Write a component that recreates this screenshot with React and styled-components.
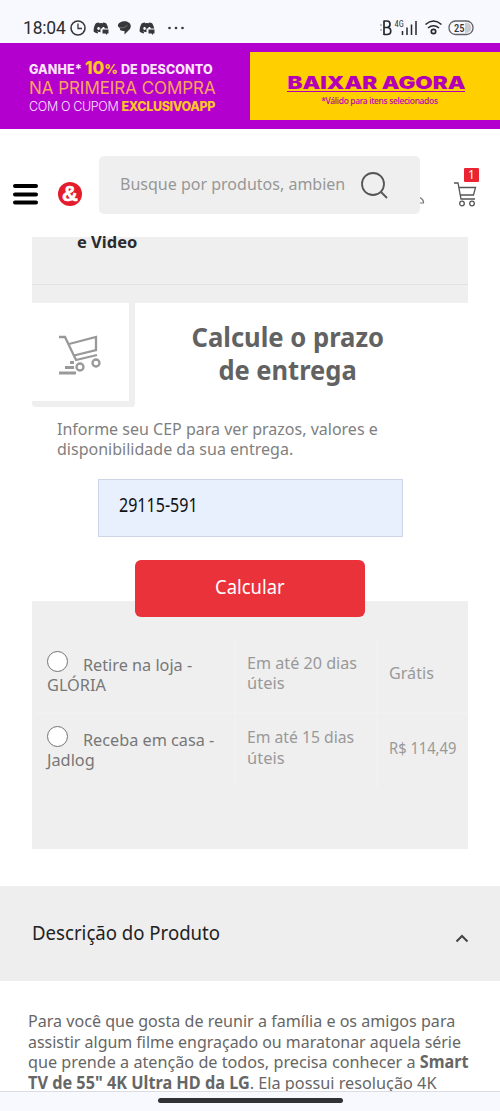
import styled, { createGlobalStyle } from "styled-components";
import { FaDiscord } from "react-icons/fa6";

const GlobalStyle = createGlobalStyle`
* {
	box-sizing: border-box;
}
body {
	margin: 0;
	background-color: #fff;
	font-family: "Noto Sans", "Open Sans", sans-serif;
	font-stretch: 87.5%;
	overflow: hidden;
}
`

const Screen = styled.div`
width: 500px;
height: 1111px;
display: flex;
flex-direction: column;
overflow: hidden;
background-color: #fff;
`

const Line = styled.span`
display: block;
width: max-content;
white-space: nowrap;
transform: scaleX(${(props) => props.$fit || 0.942});
transform-origin: ${(props) => props.$origin || "left"} center;
`

// status bar
const StatusBar = styled.div`
height: 43px;
flex: none;
display: flex;
align-items: flex-start;
padding: 18px 26px 0 23px;
background-color: #f8f9fe;
color: #2b2d30;
font-family: Roboto, sans-serif;
`
const Clock = styled.span`
width: 47px;
font-size: 17.5px;
line-height: 21px;
letter-spacing: -0.2px;
font-stretch: 100%;
`
const StatusLeft = styled.svg`
flex: none;
`
const StatusRight = styled.svg`
flex: none;
margin-left: auto;
`

// app banner
const Banner = styled.section`
height: 86px;
flex: none;
display: grid;
grid-template-columns: 250px 250px;
background-color: #b300cf;
font-family: Inter, sans-serif;
font-stretch: normal;
`
const Offer = styled.div`
padding: 17px 0 0 29px;
`
const OfferLine = styled.div`
width: max-content;
height: ${(props) => props.$height};
line-height: ${(props) => props.$height};
font-size: ${(props) => props.$size};
font-weight: ${(props) => props.$weight || 400};
color: ${(props) => props.$color || "#fbe3fb"};
letter-spacing: ${(props) => props.$spacing || "0"};
white-space: nowrap;

b {
	color: #ffc526;
	font-weight: 800;
}
`
const Percent = styled.b`
font-size: 17px;
line-height: 1;

small {
	font-size: 13px;
}
`
const Download = styled.div`
margin: 9px 0;
padding-top: 22px;
display: flex;
flex-direction: column;
align-items: center;
background-color: #ffcf00;
color: #b300b8;
`
const DownloadTitle = styled.div`
width: 178px;
height: 18px;
display: flex;
justify-content: center;
margin-left: 2px;
border-bottom: 1px solid #b300b8;
font-size: 17px;
line-height: 19px;
font-weight: 900;

span {
	white-space: nowrap;
	transform: scaleX(1.32);
}
`
const DownloadNote = styled.div`
padding-left: 9px;
font-family: "Noto Sans", sans-serif;
font-size: 8.5px;
line-height: 18px;
font-weight: 500;
letter-spacing: -0.35px;
white-space: nowrap;
`

// store header
const Header = styled.header`
height: 108px;
flex: none;
display: flex;
align-items: flex-start;
padding: 27px 0 0 12px;
`
const MenuButton = styled.svg`
flex: none;
margin: 25px 19px 0 0;
`
const Logo = styled.div`
flex: none;
width: 24px;
height: 24px;
margin: 26px 17px 0 0;
display: flex;
justify-content: center;
align-items: center;
border-radius: 50%;
background-color: #e31d2b;
color: #fff;
font-family: "Liberation Sans", sans-serif;
font-size: 22px;
font-weight: 700;
line-height: 24px;
-webkit-text-stroke: 0.6px #fff;
`
const Search = styled.div`
flex: none;
width: 321px;
height: 58px;
padding: 0 32px 0 21px;
display: grid;
grid-template-columns: 240px 28px;
align-items: center;
border-radius: 5px;
background-color: #efefef;
color: #979797;
font-size: 17px;
line-height: 52px;

span {
	margin-bottom: 2px;
}
`
const Account = styled.svg`
flex: none;
margin: 40px 0 0;
`
const Cart = styled.div`
position: relative;
margin: 26px 0 0 29px;
`
const Badge = styled.span`
position: absolute;
top: -14px;
left: 10px;
width: 15px;
height: 14px;
border-radius: 1px;
background-color: #ea2430;
color: #fff;
font-size: 12px;
line-height: 13px;
text-align: center;
`

// delivery
const Category = styled.div`
height: 66px;
flex: none;
margin: 0 32px;
background-color: #efefef;
`
const CategoryName = styled.div`
height: 48px;
padding-left: 45px;
border-bottom: 1px solid #e2e2e2;
color: #2b2b2b;
font-size: 16px;
font-weight: 700;
line-height: 10px;
`
const Delivery = styled.section`
height: 298px;
flex: none;
margin: 0 32px;
`
const DeliveryHead = styled.div`
height: 104px;
display: flex;
`
const IconBox = styled.div`
width: 103px;
height: 104px;
padding: 31px 0 0 26px;
border: solid #efefef;
border-width: 0 6px 6px 0;
border-radius: 0 0 4px 4px;
`
const Title = styled.h2`
width: 306px;
margin: 18px 0 0;
display: flex;
flex-direction: column;
align-items: center;
color: #626262;
font-size: 26px;
font-weight: 700;
line-height: 32.5px;
`
const Hint = styled.div`
height: 72px;
padding: 11.5px 0 0 25px;
color: #808080;
font-size: 17px;
line-height: 20.6px;
`
const CepInput = styled.div`
width: 305px;
height: 58px;
margin: 0 66px;
padding-left: 20px;
border: 1px solid #cdd5e6;
background-color: #e8effd;
color: #101114;
font-size: 19px;
line-height: 51px;
`
const Calculate = styled.button`
display: flex;
justify-content: center;
align-items: center;
position: relative;
width: 230px;
height: 57px;
margin: 23px 0 0 103px;
padding: 0 0 4px;
border: 0;
border-radius: 6px;
background-color: #ea323b;
color: #fff;
font: inherit;
font-size: 20px;
`
const Options = styled.div`
height: 248px;
flex: none;
margin: 0 32px;
padding: 38px 0 0 3px;
background-color: #efefef;
`
const Option = styled.div`
height: 74.5px;
display: grid;
grid-template-columns: 201px 142px 90px;
border-bottom: 2px solid #f1f1f1;
color: #999;
font-size: 17px;
line-height: 20.6px;

&:last-child {
	border-bottom: 0;
}
`
const Method = styled.div`
padding: 12px 0 0 12px;
border-right: 2px solid #f1f1f1;
color: #777;
`
const MethodTop = styled.div`
height: 24px;
display: flex;
gap: 15px;

span {
	margin-top: 4px;
}
`
const Radio = styled.i`
width: 21px;
height: 21px;
border: 1px solid #737373;
border-radius: 50%;
background-color: #fff;
`
const Term = styled.div`
padding: 13.5px 0 0 11px;
border-right: 2px solid #f1f1f1;
`
const Price = styled.div`
padding: 24px 0 0 11px;
`

// description
const Accordion = styled.div`
height: 95px;
flex: none;
margin-top: 37px;
padding: 0 31px 0 32px;
display: flex;
justify-content: space-between;
align-items: center;
background-color: #eee;
color: #222;
font-size: 20px;
line-height: 20px;

span {
	margin-bottom: 2px;
}

svg {
	margin-top: 9px;
}
`
const Description = styled.div`
height: 110px;
flex: none;
padding: 30px 0 0 28px;
overflow: hidden;
color: #666;
font-size: 17px;
line-height: 20.6px;
`
const NavBar = styled.div`
height: 20px;
flex: none;
display: flex;
justify-content: center;
padding-top: 6px;
border-top: 1px solid #dcdde2;
background-color: #f8f9fe;
`
const Handle = styled.div`
width: 185px;
height: 5px;
border-radius: 3px;
background-color: #303336;
`

const options = [
	{ top: "Retire na loja -", bottom: "GLÓRIA", days: "Em até 20 dias", daysFit: 0.95, price: "Grátis", priceFit: 0.95 },
	{ top: "Receba em casa -", bottom: "Jadlog", days: "Em até 15 dias", daysFit: 0.925, price: "R$ 114,49", priceFit: 0.865 },
];

function PhoneStatus() {
	return (
		<StatusBar>
			<Clock>18:04</Clock>
			<StatusLeft width="120" height="20" fill="none" stroke="#35383b">
				<circle cx="8" cy="10" r="7" strokeWidth="1.6" />
				<path d="M8 5.5v5h4" strokeWidth="1.3" />
				<FaDiscord x="23" y="2" width="16" height="16" color="#35383b" stroke="none" />
				<path d="M30.500 10.500h9v7h-9z" fill="#f8f9fe" stroke="none" />
				<path d="M32.500 11.500h6v4h-1.500v1.500l-1.500-1.500h-3z" fill="#35383b" stroke="none" />
				<path d="M50 4.500c3-2 7-1.500 8.500 0 3 1 3 6 0 8l-4 4v-3.500c-4 0-5-1-4.500-3-3-1-2.500-4.500 0-5.500z" fill="#35383b" stroke="none" />
				<path d="M49.500 9.500c3 1 6 0 8-2.500" stroke="#8b8d90" strokeWidth="0.7" />
				<FaDiscord x="69" y="2" width="16" height="16" color="#35383b" stroke="none" />
				<path d="M76.500 10.500h9v7h-9z" fill="#f8f9fe" stroke="none" />
				<path d="M78.500 11.500h6v4h-1.500v1.500l-1.500-1.500h-3z" fill="#35383b" stroke="none" />
				<g fill="#35383b" stroke="none">
					<circle cx="99.500" cy="10" r="1.3" />
					<circle cx="106" cy="10" r="1.3" />
					<circle cx="112.500" cy="10" r="1.3" />
				</g>
			</StatusLeft>
			<StatusRight width="96" height="20" fill="none" stroke="#25282b">
				<path d="M6 3h3c4 0 4 6.500 0 6.500H6M9 9.500c5 0 5 7 0 7H6M6 2.500v14.500" strokeWidth="1.7" />
				<path d="M3 6v2M3 11v2" stroke="#aaa" strokeWidth="1.5" />
				<text x="16.500" y="9" fontSize="8.500" fill="#35383b" stroke="none">4G</text>
				<path d="M24.500 13v4M29 9.500v7.500M33.500 6.500V17M38 3v14" strokeWidth="1.5" />
				<path d="M47.500 6.500q8-7 16 0M50 10q5.500-4.500 11 0" strokeWidth="1.6" />
				<circle cx="55.500" cy="13.500" r="2.2" strokeWidth="1.7" />
				<path d="M87 4.500h1c7 0 7 10.500 0 10.500h-1z" fill="#c9cace" stroke="none" />
				<rect x="71" y="3" width="24" height="13.500" rx="6.500" stroke="#606366" strokeWidth="1.3" />
				<text x="76" y="13.500" fontSize="10.500" fontWeight="500" fill="#35383b" stroke="none">25</text>
			</StatusRight>
		</StatusBar>
	);
}

function AppBanner() {
	return (
		<Banner>
			<Offer>
				<OfferLine $height="18px" $size="12.5px" $weight={800} $spacing="0.12px">
					GANHE* <Percent>10<small>%</small></Percent> DE DESCONTO
				</OfferLine>
				<OfferLine $height="21px" $size="17px" $color="#f9a45c" $spacing="-0.05px">
					NA PRIMEIRA COMPRA
				</OfferLine>
				<OfferLine $height="16px" $size="12.5px" $weight={300} $spacing="-0.35px">
					COM O CUPOM <b>EXCLUSIVOAPP</b>
				</OfferLine>
			</Offer>
			<Download>
				<DownloadTitle><span>BAIXAR AGORA</span></DownloadTitle>
				<DownloadNote>*Válido para itens selecionados</DownloadNote>
			</Download>
		</Banner>
	);
}

function StoreHeader() {
	return (
		<Header>
			<MenuButton width="27" height="26" stroke="#000" strokeWidth="4" strokeLinecap="round">
				<path d="M3 5h21M3 13.500h21M3 21.500h21" />
			</MenuButton>
			<Logo>&amp;</Logo>
			<Search>
				<Line>Busque por produtos, ambien</Line>
				<svg width="28" height="28" fill="none" stroke="#555" strokeWidth="1.8">
					<circle cx="13" cy="13" r="11" />
					<path d="M20.500 20.500l6.500 6.500" />
				</svg>
			</Search>
			<Account width="5" height="10" fill="none" stroke="#777" strokeWidth="1.2">
				<path d="M0 1.500q4 2.500 3.500 5.500H0" />
			</Account>
			<Cart>
				<svg width="24" height="26" fill="none" stroke="#555" strokeWidth="1.3">
					<path d="M0 1h4l3 16h14M5 5.500h16.500l-2 7.500H6.500" />
					<circle cx="8" cy="21.500" r="2.300" />
					<circle cx="18" cy="21.500" r="2.300" />
				</svg>
				<Badge>1</Badge>
			</Cart>
		</Header>
	);
}

function App() {
	return (
		<Screen>
			<GlobalStyle />
			<PhoneStatus />
			<AppBanner />
			<StoreHeader />
			<Category>
				<CategoryName>
					<Line $fit={1.03}>e Video</Line>
				</CategoryName>
			</Category>
			<Delivery>
				<DeliveryHead>
					<IconBox>
						<svg width="44" height="44" fill="none" stroke="#999" strokeWidth="2.300">
							<path d="M1 3h6l11 23 21-5M11 10l27-7v13l-22 5.500" />
							<circle cx="22" cy="33" r="3.500" />
							<circle cx="38" cy="29" r="3.500" />
							<path d="M12 28.500h4M7 33.500h9M1 39h17" strokeWidth="3" />
						</svg>
					</IconBox>
					<Title>
						<Line $fit={0.985} $origin="center">Calcule o prazo</Line>
						<Line $fit={0.98} $origin="center">de entrega</Line>
					</Title>
				</DeliveryHead>
				<Hint>
					<Line>Informe seu CEP para ver prazos, valores e</Line>
					<Line>disponibilidade da sua entrega.</Line>
				</Hint>
				<CepInput>
					<Line $fit={0.845}>29115-591</Line>
				</CepInput>
				<Calculate>
					<Line $fit={0.92} $origin="center">Calcular</Line>
				</Calculate>
			</Delivery>
			<Options>
				{options.map((option) => (
					<Option key={option.bottom}>
						<Method>
							<MethodTop>
								<Radio />
								<Line $fit={0.955}>{option.top}</Line>
							</MethodTop>
							<Line $fit={0.96}>{option.bottom}</Line>
						</Method>
						<Term>
							<Line $fit={option.daysFit}>{option.days}</Line>
							<Line $fit={0.97}>úteis</Line>
						</Term>
						<Price>
							<Line $fit={option.priceFit}>{option.price}</Line>
						</Price>
					</Option>
				))}
			</Options>
			<Accordion>
				<Line $fit={0.93}>Descrição do Produto</Line>
				<svg width="14" height="9" fill="none" stroke="#444" strokeWidth="2">
					<path d="M1.500 7.500L7 2l5.500 5.500" />
				</svg>
			</Accordion>
			<Description>
				<Line $fit={0.946}>Para você que gosta de reunir a família e os amigos para</Line>
				<Line $fit={0.938}>assistir algum filme engraçado ou maratonar aquela série</Line>
				<Line $fit={0.953}>que prende a atenção de todos, precisa conhecer a <b>Smart</b></Line>
				<Line $fit={0.956}><b>TV de 55" 4K Ultra HD da LG</b>. Ela possui resolução 4K</Line>
			</Description>
			<NavBar>
				<Handle />
			</NavBar>
		</Screen>
	);
}

export default App;
